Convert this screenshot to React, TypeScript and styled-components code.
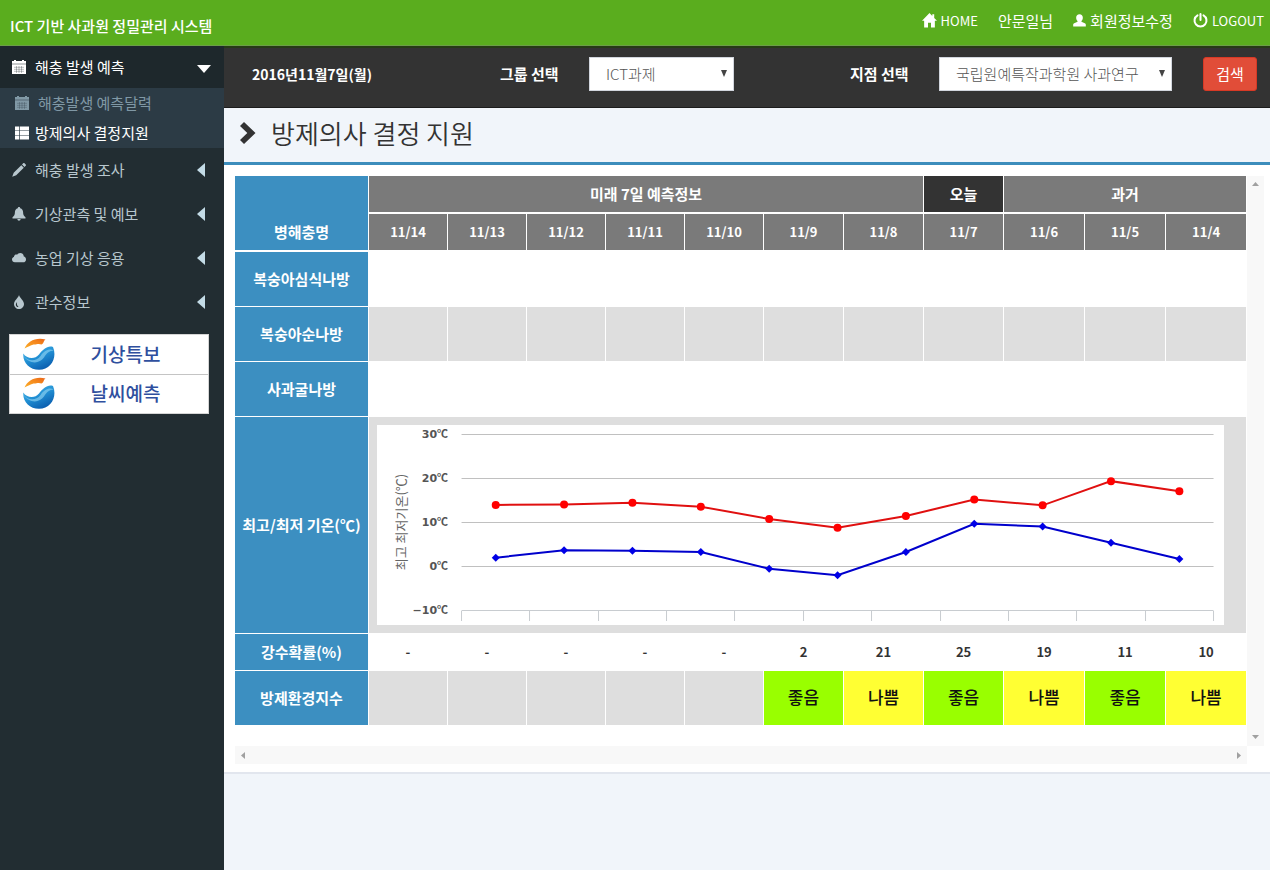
import React from "react";
import styled, { createGlobalStyle } from "styled-components";

const GlobalStyle = createGlobalStyle`
  *, *::before, *::after { box-sizing: border-box; }
  body {
    margin: 0;
    background: #f1f5fa;
    color: #333;
    font-family: "Noto Sans CJK KR", "Noto Sans", sans-serif;
    font-size: 15px;
    line-height: 20px;
  }
  a { color: inherit; text-decoration: none; }
`;

const Page = styled.div`
  display: flex;
  flex-direction: column;
  min-height: 100vh;
`;

const Header = styled.header`
  display: flex;
  align-items: center;
  justify-content: space-between;
  height: 46px;
  padding: 0 6px 0 10px;
  background: #5aad1e;
  border-bottom: 1px solid #6c9e48;
  color: #fff;
`;

const Brand = styled.a`
  padding-top: 6px;
  font-size: 15px;
  font-weight: 500;
`;

const TopNav = styled.nav`
  display: flex;
  align-items: center;
  gap: 20px;
  padding-bottom: 4px;
`;

const TopLink = styled.a<{ $latin?: boolean }>`
  display: flex;
  align-items: center;
  gap: 4px;
  font-size: ${(p) => (p.$latin ? 13 : 15)}px;
  font-weight: 400;
`;

const Body = styled.div`
  display: flex;
  flex: 1;
`;

const Sidebar = styled.aside`
  flex: 0 0 224px;
  background: #222d32;
  color: #b8c7ce;
`;

const MenuLink = styled.a<{ $open?: boolean }>`
  display: grid;
  grid-template-columns: 23px 1fr 16px;
  align-items: center;
  height: ${(p) => (p.$open ? 42 : 44)}px;
  padding: 0 12px;
  background: ${(p) => (p.$open ? "#1e282c" : "transparent")};
  color: ${(p) => (p.$open ? "#fff" : "#b8c7ce")};
`;

const SubMenu = styled.div`
  background: #2c3b45;
`;

const SubLink = styled.a<{ $active?: boolean }>`
  display: flex;
  align-items: center;
  gap: ${(p) => (p.$active ? 6 : 9)}px;
  height: 30px;
  padding-left: 15px;
  color: ${(p) => (p.$active ? "#fff" : "#8098a5")};
`;

const Banners = styled.div`
  width: 200px;
  margin: 10px 0 0 9px;
  background: #fff;
  border: 1px solid #d5d5d5;
`;

const Banner = styled.a`
  display: grid;
  grid-template-columns: 32px 1fr;
  align-items: center;
  height: 39px;
  padding: 0 34px 2px 13px;
  color: #2f4f9e;
  font-size: 19px;
  font-weight: 500;
  text-align: center;
  & + & { border-top: 1px solid #c4c4c4; }
`;

const BannerText = styled.span`
  padding-left: 22px;
`;

const Main = styled.main`
  flex: 1;
  min-width: 0;
`;

const FilterBar = styled.form`
  display: grid;
  grid-template-columns: 248fr 89fr 261fr 89fr 264fr 54fr;
  align-items: center;
  height: 62px;
  padding: 0 13px 7px 28px;
  background: #333;
  border-top: 2px solid #263b16;
  border-bottom: 1px solid #1c1c1c;
  color: #fff;
  font-weight: 700;
`;

const DateText = styled.span`
  font-size: 14px;
`;

const SelectBox = styled.div<{ $width: number }>`
  position: relative;
  width: ${(p) => p.$width}px;
`;

const Select = styled.select`
  display: block;
  width: 100%;
  height: 34px;
  padding: 0 24px 0 16px;
  appearance: none;
  background: #fff;
  border: 1px solid #d2d6de;
  border-radius: 0;
  color: #555;
  font: 300 15px/20px "Noto Sans CJK KR", sans-serif;
`;

const SelectArrow = styled.svg`
  position: absolute;
  top: 13px;
  right: 6px;
  pointer-events: none;
`;

const SearchButton = styled.button`
  width: 54px;
  height: 34px;
  padding: 0;
  background: #e14d38;
  border: 1px solid #d73925;
  border-radius: 3px;
  color: #fff;
  font: 400 15px/20px "Noto Sans CJK KR", sans-serif;
`;

const TitleBar = styled.div`
  display: flex;
  align-items: center;
  gap: 14px;
  height: 54px;
  padding: 0 15px 4px;
  background: #f1f5fa;
`;

const Title = styled.h1`
  margin: 0;
  font-size: 26px;
  line-height: 36px;
  font-weight: 350;
`;

const Panel = styled.section`
  display: grid;
  grid-template-columns: 1fr 17px;
  grid-template-rows: auto 18px;
  padding: 11px 6px 8px 11px;
  background: #fff;
  border-top: 3px solid #3c8dbc;
  border-bottom: 2px solid #e2e6ee;
`;

const ScrollTrack = styled.div<{ $vertical?: boolean }>`
  display: flex;
  flex-direction: ${(p) => (p.$vertical ? "column" : "row")};
  align-items: center;
  justify-content: space-between;
  padding: ${(p) => (p.$vertical ? "5px 0 6px" : "0 5px")};
  background: #f8f8f8;
`;

const TableArea = styled.div`
  padding-bottom: 20px;
`;

const Table = styled.table`
  width: 100%;
  table-layout: fixed;
  border-collapse: separate;
  border-spacing: 0;
  font-size: 13px;
  font-weight: 700;
  text-align: center;
`;

const HeadCell = styled.th<{ $today?: boolean }>`
  height: 38px;
  padding: 0;
  background: ${(p) => (p.$today ? "#333" : "#7a7a7a")};
  background-clip: padding-box;
  border-right: 1px solid #fff;
  border-bottom: 2px solid #fff;
  color: #fff;
  font-size: ${(p) => (p.colSpan || p.$today ? 15 : 13)}px;
`;

const RowHead = styled.th<{ $corner?: boolean }>`
  padding: ${(p) => (p.$corner ? "0 0 8px" : "0")};
  background: #3c8fc1;
  border-right: 1px solid #fff;
  border-bottom: ${(p) => (p.$corner ? 2 : 1)}px solid #fff;
  color: #fff;
  font-size: 15px;
  vertical-align: ${(p) => (p.$corner ? "bottom" : "middle")};
`;

type Tone = "plain" | "grey" | "good" | "bad";
const tones: Record<Tone, string> = {
  plain: "#fff",
  grey: "#dedede",
  good: "#99ff00",
  bad: "#ffff33",
};

const Cell = styled.td<{ $tone: Tone; $height: number }>`
  height: ${(p) => p.$height}px;
  padding: 0;
  background: ${(p) => tones[p.$tone]};
  border-right: 1px solid #fff;
  border-bottom: 1px solid #fff;
`;

const Grade = styled.span`
  color: #111;
  font-size: 17px;
  font-weight: 500;
`;

const ChartCell = styled.td`
  height: 217px;
  padding: 8px 22px 8px 8px;
  background: #dedede;
  border-right: 1px solid #fff;
  border-bottom: 1px solid #fff;
`;

const ChartSvg = styled.svg`
  display: block;
  width: 100%;
  height: 200px;
  background: #fff;
  font-family: "DejaVu Sans", "Noto Sans CJK KR", sans-serif;
`;

const AxisTitle = styled.text`
  font: 400 13px "Noto Sans CJK KR", sans-serif;
  fill: #666;
`;

const Unit = styled.tspan`
  font-family: "Noto Sans CJK KR", sans-serif;
`;

const Icon = ({ size = 14, children }: { size?: number; children: React.ReactNode }) => (
  <svg width={size} height={size} viewBox="0 0 14 14" fill="currentColor" aria-hidden="true">
    {children}
  </svg>
);

const HomeIcon = () => (
  <Icon size={15}>
    <path d="M7 0 0 7.3h2V13.5h3.6V9h2.8v4.5H12V7.3h2L11.4 4.6V1.2H9.6v1.5z" />
  </Icon>
);
const UserIcon = () => (
  <Icon size={13}>
    <path d="M7 .3c2.2 0 3.600 1.500 3.600 3.700 0 1.600-.7 2.900-1.500 3.600v.8l3.600 1.500c.8.4 1.100.9 1.100 1.800V13.500H.2V11.700c0-.9.3-1.400 1.100-1.800l3.600-1.500v-.8C4.100 6.900 3.400 5.600 3.400 4 3.400 1.800 4.800.3 7 .3z" />
  </Icon>
);
const PowerIcon = () => (
  <Icon size={15}>
    <g fill="none" stroke="currentColor" strokeWidth="1.9" strokeLinecap="round">
      <path d="M4.2 2.2a5.600 5.600 0 1 0 5.600 0" />
      <path d="M7 1v5.500" />
    </g>
  </Icon>
);
const CalendarIcon = ({ grid = "#1e282c" }: { grid?: string }) => (
  <Icon>
    <path d="M0 1h2V0h2v1h6V0h2v1h2v2.800H0zM0 4.300h14V14H0z" />
    <path
      d="M2 7.300h10M2 9.300h10M2 11.300h10M4.500 6v7M7 6v7M9.500 6v7"
      stroke={grid}
      strokeWidth=".3"
      fill="none"
    />
  </Icon>
);
const ListIcon = () => (
  <Icon>
    <path d="M0 .6h4.300v3.800H0zM5 .6h9v3.800H5zM0 5.100h4.300v3.800H0zM5 5.100h9v3.800H5zM0 9.600h4.300v3.800H0zM5 9.600h9v3.800H5z" />
  </Icon>
);
const PencilIcon = () => (
  <Icon>
    <path d="M11.200.3c.4-.4.9-.4 1.300 0l1.200 1.200c.4.4.4.9 0 1.300L12.500 4 10 1.500zM9.300 2.200l2.500 2.500-7.600 7.600L.2 13.800 1.700 9.800z" />
  </Icon>
);
const BellIcon = () => (
  <Icon>
    <path d="M7 0c.7 0 1.200.5 1.200 1.200 1.900.5 2.900 2.100 2.900 4 0 2.600.8 3.600 2.400 5.100v1.100H.5v-1.100c1.600-1.500 2.400-2.500 2.400-5.100 0-1.900 1-3.500 2.900-4C5.800.5 6.300 0 7 0zM5.400 12h3.200c0 1-.7 1.700-1.600 1.700S5.400 13 5.400 12z" />
  </Icon>
);
const CloudIcon = () => (
  <Icon>
    <path d="M2.800 11.300C1.200 11.300 0 10.200 0 8.600c0-1.300.8-2.200 1.900-2.500C2 4.600 3 3.600 4.400 3.600c.3 0 .5 0 .7.1C5.700 2.600 6.800 1.900 8.200 1.900c2 0 3.600 1.500 3.600 3.700 1.300.3 2.200 1.400 2.200 2.800 0 1.700-1.200 2.900-2.800 2.900z" />
  </Icon>
);
const DropIcon = () => (
  <Icon>
    <path
      fillRule="evenodd"
      d="M7 0c.4 2.900 5 5.200 5 9 0 2.900-2.200 5-5 5s-5-2.100-5-5C2 5.200 6.600 2.900 7 0zM5.100 6.900C4 8 3.600 9.500 4.100 10.700c.4 1 1.500 1.500 2.500 1.200C5.200 10.900 4.500 9.200 5.100 6.900z"
    />
  </Icon>
);

const CaretLeft = () => (
  <svg width="16" height="14" viewBox="0 0 16 14" aria-hidden="true">
    <path d="M1 7 9 0v14z" fill="#c3dbe6" />
  </svg>
);
const CaretDown = () => (
  <svg width="16" height="14" viewBox="0 0 16 14" aria-hidden="true">
    <path d="M1 5h14L8 13z" fill="#fff" />
  </svg>
);

const SwirlLogo = ({ id }: { id: string }) => (
  <svg width="32" height="32" viewBox="0 0 32 32" aria-hidden="true">
    <defs>
      <linearGradient id={`${id}-blue`} x1="0" y1="0" x2=".6" y2="1">
        <stop offset="0" stopColor="#5cc0ea" />
        <stop offset=".5" stopColor="#2393d6" />
        <stop offset="1" stopColor="#0b5fb0" />
      </linearGradient>
      <linearGradient id={`${id}-orange`} x1="0" y1="1" x2="1" y2="0">
        <stop offset="0" stopColor="#fbb02a" />
        <stop offset=".6" stopColor="#f5871c" />
        <stop offset="1" stopColor="#ea6418" />
      </linearGradient>
    </defs>
    <path
      d="M1.500 10.500C4.500 3.500 12.500-1 22.500 1.500 20.500 2.500 21 5.500 18.500 6.500 15 5 13 7 10.500 6.500 7.500 7 5 9 1.500 10.500z"
      fill={`url(#${id}-orange)`}
    />
    <path
      d="M.3 15.500C3.500 20.500 11.500 22 16 16.500 19.500 11.500 25 7 30 9 34.500 19.500 28 31.700 16 31.700 6.500 31.700-.5 24.500.3 15.500z"
      fill={`url(#${id}-blue)`}
    />
    <path
      d="M.5 18C5 23.500 13 24 17.500 18 21 13 26 10 31 12.500 26 12.500 23.500 15.500 21 19.500 16.500 26 6.500 26.500.5 18z"
      fill="#86cdf0"
      opacity=".7"
    />
  </svg>
);

const menu = [
  { label: "해충 발생 조사", icon: <PencilIcon /> },
  { label: "기상관측 및 예보", icon: <BellIcon /> },
  { label: "농업 기상 응용", icon: <CloudIcon /> },
  { label: "관수정보", icon: <DropIcon /> },
];

const columns = [
  { date: "11/14", width: 79, rain: "-", grade: "" },
  { date: "11/13", width: 79, rain: "-", grade: "" },
  { date: "11/12", width: 79, rain: "-", grade: "" },
  { date: "11/11", width: 79, rain: "-", grade: "" },
  { date: "11/10", width: 79, rain: "-", grade: "" },
  { date: "11/9", width: 80, rain: "2", grade: "좋음" },
  { date: "11/8", width: 80, rain: "21", grade: "나쁨" },
  { date: "11/7", width: 80, rain: "25", grade: "좋음" },
  { date: "11/6", width: 81, rain: "19", grade: "나쁨" },
  { date: "11/5", width: 81, rain: "11", grade: "좋음" },
  { date: "11/4", width: 81, rain: "10", grade: "나쁨" },
];

const pests: { name: string; tone: Tone }[] = [
  { name: "복숭아심식나방", tone: "plain" },
  { name: "복숭아순나방", tone: "grey" },
  { name: "사과굴나방", tone: "plain" },
];

const highs = [14, 14.1, 14.5, 13.6, 10.8, 8.8, 11.5, 15.2, 13.9, 19.4, 17.1];
const lows = [2, 3.7, 3.6, 3.3, -0.5, -2, 3.3, 9.7, 9.1, 5.4, 1.7];

const plot = { left: 84.5, right: 836.5, top: 9.5, bottom: 185.5 };
const step = (plot.right - plot.left) / highs.length;
const xAt = (i: number) => plot.left + step * (i + 0.5);
const yAt = (t: number) => plot.top + ((30 - t) / 40) * (plot.bottom - plot.top);
const linePoints = (values: number[]) => values.map((t, i) => `${xAt(i)},${yAt(t)}`).join(" ");

const TemperatureChart = () => (
  <ChartSvg viewBox="0 0 847 200" role="img" aria-label="최고 최저기온(℃)">
    {[30, 20, 10, 0, -10].map((t) => (
      <g key={t}>
        <line
          x1={plot.left}
          x2={plot.right}
          y1={Math.round(yAt(t)) - 0.5}
          y2={Math.round(yAt(t)) - 0.5}
          stroke={t === -10 ? "#c8ccd0" : "#c0c0c0"}
        />
        <text x="71" y={Math.floor(yAt(t)) + 4} textAnchor="end" fontSize="11" fontWeight="700" fill="#555">
          {`${t < 0 ? "−" : ""}${Math.abs(t)}`}
          <Unit>℃</Unit>
        </text>
      </g>
    ))}
    {Array.from({ length: highs.length + 1 }, (_, i) => {
      const x = Math.floor(plot.left + step * i) + 0.5;
      return <line key={i} x1={x} x2={x} y1="186" y2="196" stroke="#c8ccd0" />;
    })}
    <AxisTitle transform="translate(29 97) rotate(-90)" textAnchor="middle">
      최고 최저기온(℃)
    </AxisTitle>
    <polyline points={linePoints(lows)} fill="none" stroke="#0000cc" strokeWidth="2" />
    <polyline points={linePoints(highs)} fill="none" stroke="#e01010" strokeWidth="2" />
    {lows.map((t, i) => (
      <path key={i} d={`M${xAt(i)} ${yAt(t) - 4}l4 4-4 4-4-4z`} fill="#0000e6" />
    ))}
    {highs.map((t, i) => (
      <circle key={i} cx={xAt(i)} cy={yAt(t)} r="4" fill="#ff0000" />
    ))}
  </ChartSvg>
);

const TrackArrow = ({ d }: { d: string }) => (
  <svg width="7" height="7" viewBox="0 0 7 7" aria-hidden="true">
    <path d={d} fill="#a0a0a0" />
  </svg>
);

const Picker = ({ id, value, width }: { id: string; value: string; width: number }) => (
  <SelectBox $width={width}>
    <Select id={id} defaultValue={value}>
      <option value={value}>{value}</option>
    </Select>
    <SelectArrow width="8" height="7" viewBox="0 0 8 7" aria-hidden="true">
      <path d="M1 0h6L4 7z" fill="#444" />
    </SelectArrow>
  </SelectBox>
);

export default function App() {
  return (
    <Page>
      <GlobalStyle />
      <Header>
        <Brand href="#">ICT 기반 사과원 정밀관리 시스템</Brand>
        <TopNav>
          <TopLink href="#" $latin><HomeIcon />HOME</TopLink>
          <TopLink href="#">안문일님</TopLink>
          <TopLink href="#"><UserIcon />회원정보수정</TopLink>
          <TopLink href="#" $latin><PowerIcon />LOGOUT</TopLink>
        </TopNav>
      </Header>
      <Body>
        <Sidebar>
          <nav>
            <MenuLink href="#" $open>
              <CalendarIcon />
              <span>해충 발생 예측</span>
              <CaretDown />
            </MenuLink>
            <SubMenu>
              <SubLink href="#"><CalendarIcon grid="#2c3b45" />해충발생 예측달력</SubLink>
              <SubLink href="#" $active><ListIcon />방제의사 결정지원</SubLink>
            </SubMenu>
            {menu.map((item) => (
              <MenuLink href="#" key={item.label}>
                {item.icon}
                <span>{item.label}</span>
                <CaretLeft />
              </MenuLink>
            ))}
          </nav>
          <Banners>
            <Banner href="#"><SwirlLogo id="alert" /><BannerText>기상특보</BannerText></Banner>
            <Banner href="#"><SwirlLogo id="forecast" /><BannerText>날씨예측</BannerText></Banner>
          </Banners>
        </Sidebar>
        <Main>
          <FilterBar onSubmit={(e) => e.preventDefault()}>
            <DateText>2016년11월7일(월)</DateText>
            <label htmlFor="group">그룹 선택</label>
            <Picker id="group" value="ICT과제" width={145} />
            <label htmlFor="site">지점 선택</label>
            <Picker id="site" value="국립원예특작과학원 사과연구" width={233} />
            <SearchButton type="submit">검색</SearchButton>
          </FilterBar>
          <TitleBar>
            <svg width="18" height="22" viewBox="0 0 18 22" aria-hidden="true">
              <path d="M1 4 5 0l11.500 11L5 22l-4-4 7.300-7z" fill="#333" />
            </svg>
            <Title>방제의사 결정 지원</Title>
          </TitleBar>
          <Panel>
            <TableArea>
              <Table>
                <colgroup>
                  <col width="134" />
                  {columns.map((c) => <col key={c.date} width={c.width} />)}
                </colgroup>
                <thead>
                  <tr>
                    <RowHead $corner rowSpan={2} scope="col">병해충명</RowHead>
                    <HeadCell colSpan={7}>미래 7일 예측정보</HeadCell>
                    <HeadCell $today>오늘</HeadCell>
                    <HeadCell colSpan={3}>과거</HeadCell>
                  </tr>
                  <tr>
                    {columns.map((c) => <HeadCell key={c.date} scope="col">{c.date}</HeadCell>)}
                  </tr>
                </thead>
                <tbody>
                  {pests.map((pest) => (
                    <tr key={pest.name}>
                      <RowHead scope="row">{pest.name}</RowHead>
                      {columns.map((c) => <Cell key={c.date} $tone={pest.tone} $height={55} />)}
                    </tr>
                  ))}
                  <tr>
                    <RowHead scope="row">최고/최저 기온(℃)</RowHead>
                    <ChartCell colSpan={11}><TemperatureChart /></ChartCell>
                  </tr>
                  <tr>
                    <RowHead scope="row">강수확률(%)</RowHead>
                    {columns.map((c) => <Cell key={c.date} $tone="plain" $height={37}>{c.rain}</Cell>)}
                  </tr>
                  <tr>
                    <RowHead scope="row">방제환경지수</RowHead>
                    {columns.map((c) => (
                      <Cell
                        key={c.date}
                        $tone={c.grade === "좋음" ? "good" : c.grade === "나쁨" ? "bad" : "grey"}
                        $height={55}
                      >
                        {c.grade && <Grade>{c.grade}</Grade>}
                      </Cell>
                    ))}
                  </tr>
                </tbody>
              </Table>
            </TableArea>
            <ScrollTrack $vertical aria-hidden="true">
              <TrackArrow d="M0 5h7L3.500 1z" />
              <TrackArrow d="M0 2h7L3.500 6z" />
            </ScrollTrack>
            <ScrollTrack aria-hidden="true">
              <TrackArrow d="M5 0v7L1 3.500z" />
              <TrackArrow d="M2 0v7L6 3.500z" />
            </ScrollTrack>
          </Panel>
        </Main>
      </Body>
    </Page>
  );
}
